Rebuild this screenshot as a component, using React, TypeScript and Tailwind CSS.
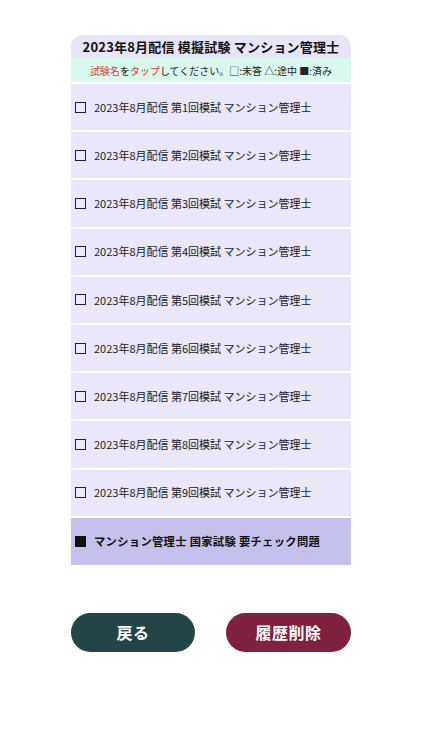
import React from "react";

const font = { fontFamily: '"Noto Sans CJK JP", "Noto Sans", sans-serif' };

export default function App() {
  const rows = [1, 2, 3, 4, 5, 6, 7, 8, 9];
  return (
    <div className="w-[422px] h-[750px] bg-white" style={font}>
      <div className="pt-[35px] px-[71px]">
        <div className="w-[280px]">
          <div className="h-[23px] rounded-t-[12px] bg-[#e7e5f8] flex items-center justify-center text-[13px] font-bold text-[#111] tracking-[0.2px]">
            2023年8月配信 模擬試験 マンション管理士
          </div>
          <div className="h-[24px] bg-[#d9f8ee] flex items-center justify-center text-[10px] text-[#222]">
            <span className="text-[#e03a3a]">試験名</span>を<span className="text-[#e03a3a]">タップ</span>してください。□:未答 △:途中 ■:済み
          </div>
          {rows.map((n) => (
            <div
              key={n}
              className="mt-[2px] h-[46.2px] bg-[#e9e7f9] flex items-center pl-[4px] text-[11px] text-[#222]"
            >
              <span className="w-[11px] h-[11px] border-[1.5px] border-[#222] mr-[8px] shrink-0" />
              <span>2023年8月配信 第{n}回模試 マンション管理士</span>
            </div>
          ))}
          <div className="mt-[2px] h-[47px] bg-[#c5c1ed] flex items-center pl-[4px] text-[11.3px] font-bold text-[#111] tracking-[0.3px]">
            <span className="w-[11px] h-[11px] bg-[#111] mr-[8px] shrink-0" />
            <span>マンション管理士 国家試験 要チェック問題</span>
          </div>
        </div>
        <div className="mt-[48px] w-[280px] flex justify-between">
          <button className="w-[124px] h-[39px] rounded-full bg-[#234546] text-white text-[16px] font-semibold tracking-[0.5px]">
            戻る
          </button>
          <button className="w-[125px] h-[39px] rounded-full bg-[#80213f] text-white text-[16px] font-semibold tracking-[0.5px]">
            履歴削除
          </button>
        </div>
      </div>
    </div>
  );
}
